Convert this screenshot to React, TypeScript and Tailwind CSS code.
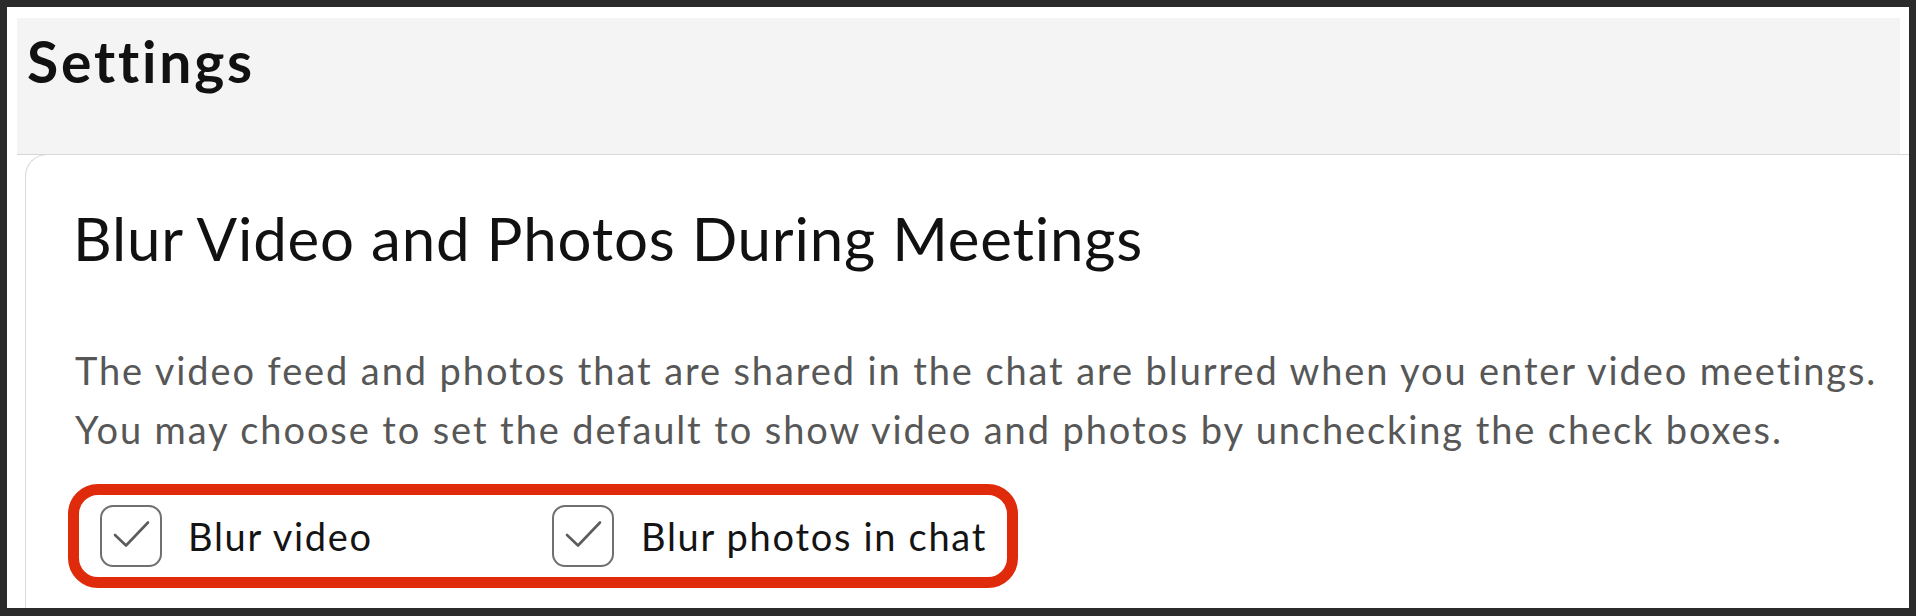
import React from 'react';

const CheckBox: React.FC = () => (
    <div className="w-[62px] h-[62px] shrink-0 rounded-[13px] border-2 border-[#707070] bg-white flex items-center justify-center">
        <svg width="58" height="58" viewBox="0 0 58 58" fill="none">
            <path d="M13 28 L24 38.5 L46 15.5" stroke="#5c5c5c" strokeWidth="2.6" strokeLinecap="round" strokeLinejoin="round" />
        </svg>
    </div>
);

export default function App() {
    return (
        <div className="w-[1916px] h-[616px] bg-[#2b2b2b] pt-[7px] pl-[7px] pr-[7px] pb-[8px]" style={{ fontFamily: 'Lato, "Open Sans", sans-serif' }}>
            <div className="w-full h-full bg-white flex flex-col overflow-hidden">
                {/* page header */}
                <div className="mt-[11px] ml-[10px] mr-[9px] h-[137px] bg-[#f4f4f4] border-b border-[#d6d6d6] pl-[10px] pt-[15px]">
                    <h1 className="text-[57px] leading-[57px] font-bold text-[#111] tracking-[2.8px]">Settings</h1>
                </div>

                {/* settings card */}
                <div className="flex-1 ml-[18px] -mt-px border-l border-t border-[#d9d9d9] rounded-tl-[22px] pl-[47px] pt-[53px]">
                    <h2 className="text-[60px] leading-[60px] font-normal text-[#111] tracking-[0.8px] whitespace-nowrap">
                        Blur Video and Photos During Meetings
                    </h2>
                    <p className="mt-[73px] ml-[2px] text-[38px] leading-[59px] text-[#575757] tracking-[1.9px] whitespace-nowrap">
                        The video feed and photos that are shared in the chat are blurred when you enter video meetings.
                        <br />
                        You may choose to set the default to show video and photos by unchecking the check boxes.
                    </p>
                    <div className="mt-[25px] -ml-[5px] w-[950px] h-[104px] border-[11px] border-[#e02a0c] rounded-[30px] flex items-center pl-[21px]">
                        <label className="w-[452px] flex items-center gap-[26px]">
                            <CheckBox />
                            <span className="text-[38px] text-[#141414] tracking-[1.7px] whitespace-nowrap">Blur video</span>
                        </label>
                        <label className="flex items-center gap-[27px]">
                            <CheckBox />
                            <span className="text-[38px] text-[#141414] tracking-[1.7px] whitespace-nowrap">Blur photos in chat</span>
                        </label>
                    </div>
                </div>
            </div>
        </div>
    );
}
